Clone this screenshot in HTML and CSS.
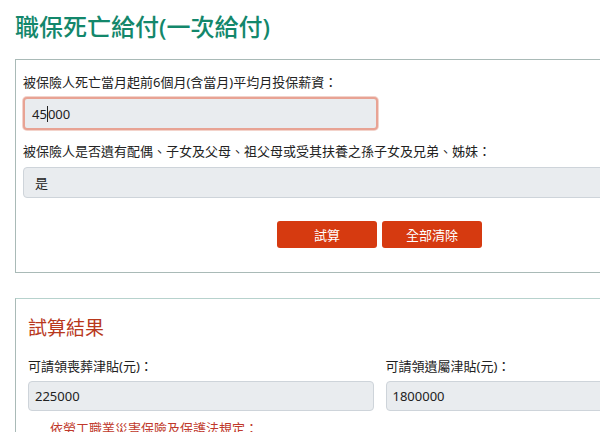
FILE: index.html
```html
<!DOCTYPE html>
<html lang="zh-Hant">
<head>
<meta charset="utf-8">
<title>職保死亡給付(一次給付)</title>
<link rel="stylesheet" href="styles.css">
</head>
<body>
<div class="page">
  <h1 class="title">職保死亡給付(一次給付)</h1>
  <section class="panel form-panel">
    <label class="label">被保險人死亡當月起前6個月(含當月)平均月投保薪資：</label>
    <div class="field field-half field-focus">45<span class="caret"></span>000</div>
    <label class="label label-2">被保險人是否遺有配偶、子女及父母、祖父母或受其扶養之孫子女及兄弟、姊妹：</label>
    <div class="field field-select">是</div>
    <div class="actions">
      <button class="btn">試算</button>
      <button class="btn">全部清除</button>
    </div>
  </section>
  <section class="panel result-panel">
    <h2 class="result-title">試算結果</h2>
    <div class="cols">
      <div class="col">
        <label class="label">可請領喪葬津貼(元)：</label>
        <div class="field field-result">225000</div>
        <p class="note">依勞工職業災害保險及保護法規定：</p>
      </div>
      <div class="col">
        <label class="label">可請領遺屬津貼(元)：</label>
        <div class="field field-result">1800000</div>
      </div>
    </div>
  </section>
</div>
</body>
</html>
```
FILE: styles.css
```css
html, body {
  margin: 0;
  padding: 0;
  background: #ffffff;
  overflow: hidden;
}
body {
  font-family: "Noto Sans", "Noto Sans CJK TC", sans-serif;
  color: #222;
}
.page {
  width: 729px;
  padding: 0 15px;
}
.title {
  margin: 12px 0 17px;
  font-size: 24px;
  line-height: 30px;
  font-weight: 500;
  color: #13876b;
}
.panel {
  border: 1px solid #a9bab7;
  background: #fff;
}
.form-panel {
  padding: 12px 7px 24px;
}
.label {
  display: block;
  font-size: 13px;
  line-height: 20px;
  color: #222;
}
.label-2 {
  margin-top: 11px;
}
.field {
  box-sizing: border-box;
  background: #e9ecef;
  border: 1px solid #ced4da;
  border-radius: 4px;
  font-size: 13px;
  color: #222;
  display: flex;
  align-items: center;
}
.field-half {
  width: 355px;
  height: 33px;
  margin-top: 5px;
  padding-left: 7px;
}
.field-focus {
  border: 2px solid #e8a394;
  box-shadow: 0 0 0 1px #f3d3cb;
}
.caret {
  display: inline-block;
  width: 1px;
  height: 16px;
  background: #222;
}
.field-select {
  height: 31px;
  margin-top: 6px;
  padding-left: 11px;
}
.actions {
  display: flex;
  justify-content: center;
  gap: 5px;
  margin-top: 23px;
}
.btn {
  width: 100px;
  height: 27px;
  border: none;
  border-radius: 3px;
  background: #d63a10;
  color: #fff;
  font-family: inherit;
  font-size: 13px;
  padding: 0;
}
.result-panel {
  margin-top: 25px;
  border-top-color: #b7d2cd;
  padding: 16px 12px 0;
}
.result-title {
  margin: 0 0 15px;
  font-size: 19px;
  line-height: 26px;
  font-weight: 400;
  color: #b8381c;
}
.cols {
  display: grid;
  grid-template-columns: 1fr 1fr;
  column-gap: 12px;
}
.field-result {
  height: 30px;
  margin-top: 5px;
  padding-left: 6px;
}
.note {
  margin: 7px 0 0;
  padding-left: 22px;
  font-size: 13px;
  line-height: 20px;
  color: #c0392b;
}
```
